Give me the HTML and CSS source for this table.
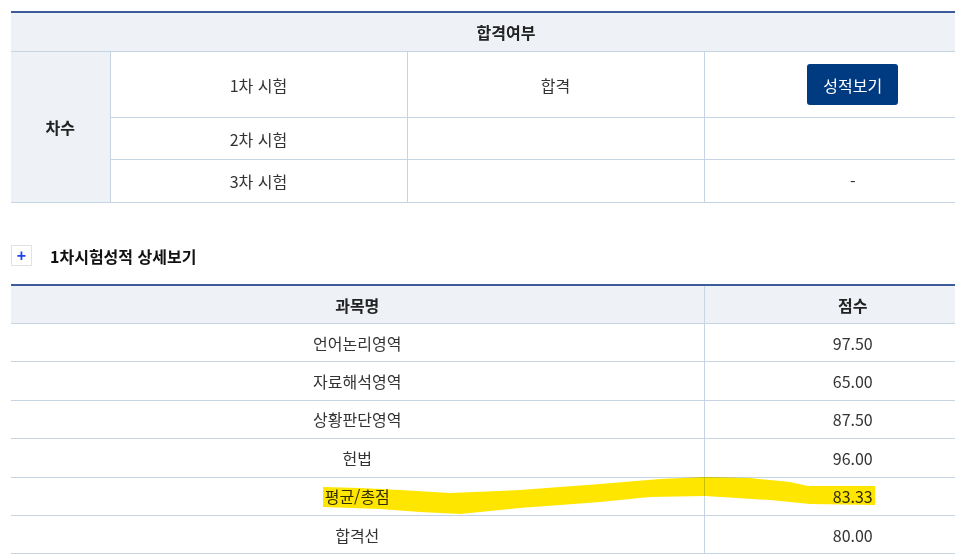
FILE: index.html
```html
<!DOCTYPE html>
<html lang="ko">
<head>
<meta charset="utf-8">
<title>합격여부</title>
<link rel="stylesheet" href="styles.css">
</head>
<body>
<div class="page">
  <table class="grid result">
    <colgroup>
      <col class="col-side">
      <col class="col-mid">
      <col class="col-mid">
      <col class="col-last">
    </colgroup>
    <thead>
      <tr><th colspan="4" class="head">합격여부</th></tr>
    </thead>
    <tbody>
      <tr class="r1">
        <th rowspan="3" class="side">차수</th>
        <td>1차 시험</td>
        <td>합격</td>
        <td><button class="btn" type="button">성적보기</button></td>
      </tr>
      <tr class="r2">
        <td>2차 시험</td>
        <td></td>
        <td></td>
      </tr>
      <tr class="r3">
        <td>3차 시험</td>
        <td></td>
        <td>-</td>
      </tr>
    </tbody>
  </table>

  <div class="subtitle">
    <span class="plus">+</span>
    <span class="subtitle-text">1차시험성적 상세보기</span>
  </div>

  <table class="grid scores">
    <colgroup>
      <col class="col-name">
      <col class="col-last">
    </colgroup>
    <thead>
      <tr><th>과목명</th><th>점수</th></tr>
    </thead>
    <tbody>
      <tr><td>언어논리영역</td><td>97.50</td></tr>
      <tr><td>자료해석영역</td><td>65.00</td></tr>
      <tr><td>상황판단영역</td><td>87.50</td></tr>
      <tr><td>헌법</td><td>96.00</td></tr>
      <tr><td>평균/총점</td><td>83.33</td></tr>
      <tr><td>합격선</td><td>80.00</td></tr>
    </tbody>
  </table>
</div>
<svg class="marker" width="955" height="559" viewBox="0 0 955 559" aria-hidden="true">
  <polygon fill="#ffe600" points="323,487 360,488 400,490 450,493 520,490 600,484 660,479 705,477 750,478 790,482 808,486 875,486 875,505 810,504 770,500 705,496 650,497 600,502 520,508 460,514 420,512 380,509 323,507"/>
</svg>
</body>
</html>
```

FILE: styles.css
```css
html, body {
  margin: 0;
  padding: 0;
  overflow: hidden;
  background: #ffffff;
}
body {
  width: 955px;
  height: 559px;
  position: relative;
  font-family: "Noto Sans CJK KR", "Liberation Sans", sans-serif;
  color: #333333;
  font-size: 16px;
}
.page {
  padding: 11px 0 0 11px;
  width: 990px;
}
.grid {
  width: 990px;
  border-collapse: collapse;
  border-top: 2px solid #3e5c99;
  table-layout: fixed;
}
.col-side { width: 99px; }
.col-mid { width: 297px; }
.col-last { width: 297px; }
.col-name { width: 693px; }
.grid th, .grid td {
  padding: 0;
  text-align: center;
  vertical-align: middle;
  border: 1px solid #c5d5e4;
  font-size: 16px;
  line-height: 20px;
}
.grid tr > :first-child { border-left: none; }
.grid tr > :last-child { border-right: none; }
.grid th {
  background: #eef2f7;
  font-weight: bold;
  color: #222222;
}
.result .head { height: 38px; }
.result .r1 td { height: 65px; }
.result .r2 td { height: 41px; }
.result .r3 td { height: 42px; }
.btn {
  font-family: "Noto Sans CJK KR", "Liberation Sans", sans-serif;
  background: #003a80;
  color: #ffffff;
  border: none;
  border-radius: 3px;
  width: 91px;
  height: 41px;
  font-size: 16px;
  padding: 0;
  cursor: pointer;
}
.subtitle {
  display: flex;
  align-items: center;
  gap: 18px;
  margin-top: 42px;
  height: 21px;
  margin-bottom: 18px;
}
.plus {
  width: 19px;
  height: 19px;
  border: 1px solid #e2e2e2;
  display: flex;
  align-items: center;
  justify-content: center;
  color: #1f3ff0;
  font-weight: bold;
  font-size: 16px;
  line-height: 1;
  font-family: "Liberation Sans", sans-serif;
}
.subtitle-text {
  font-weight: bold;
  color: #111111;
  font-size: 16px;
}
.scores thead th { height: 37px; }
.scores tbody td { height: 37.4px; }
.marker {
  position: absolute;
  left: 0;
  top: 0;
  pointer-events: none;
  mix-blend-mode: multiply;
}
```
